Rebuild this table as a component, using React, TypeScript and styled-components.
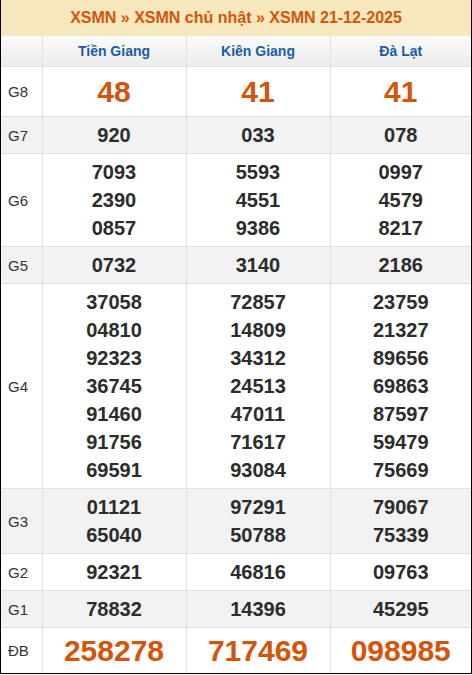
import React from 'react';
import styled, { createGlobalStyle } from 'styled-components';

const GlobalStyle = createGlobalStyle`
  body {
    margin: 0;
    font-family: "Liberation Sans", Arial, sans-serif;
    background: #fff;
  }
`;

type Prize = { label: string; big?: boolean; alt?: boolean; values: string[][] };

const provinces = ['Tiền Giang', 'Kiên Giang', 'Đà Lạt'];

const prizes: Prize[] = [
  { label: 'G8', big: true, values: [['48'], ['41'], ['41']] },
  { label: 'G7', alt: true, values: [['920'], ['033'], ['078']] },
  {
    label: 'G6',
    values: [
      ['7093', '2390', '0857'],
      ['5593', '4551', '9386'],
      ['0997', '4579', '8217'],
    ],
  },
  { label: 'G5', alt: true, values: [['0732'], ['3140'], ['2186']] },
  {
    label: 'G4',
    values: [
      ['37058', '04810', '92323', '36745', '91460', '91756', '69591'],
      ['72857', '14809', '34312', '24513', '47011', '71617', '93084'],
      ['23759', '21327', '89656', '69863', '87597', '59479', '75669'],
    ],
  },
  {
    label: 'G3',
    alt: true,
    values: [
      ['01121', '65040'],
      ['97291', '50788'],
      ['79067', '75339'],
    ],
  },
  { label: 'G2', values: [['92321'], ['46816'], ['09763']] },
  { label: 'G1', alt: true, values: [['78832'], ['14396'], ['45295']] },
  { label: 'ĐB', big: true, values: [['258278'], ['717469'], ['098985']] },
];

const App: React.FC = () => {
  return (
    <>
      <GlobalStyle />
      <Frame>
        <Title>XSMN » XSMN chủ nhật » XSMN 21-12-2025</Title>
        <Table>
          <colgroup>
            <col style={{ width: 41 }} />
            <col style={{ width: 144 }} />
            <col style={{ width: 144 }} />
            <col />
          </colgroup>
          <thead>
            <tr>
              <HeadCell />
              {provinces.map(p => (
                <HeadCell key={p}>{p}</HeadCell>
              ))}
            </tr>
          </thead>
          <tbody>
            {prizes.map(row => (
              <Row key={row.label} $alt={row.alt}>
                <LabelCell>{row.label}</LabelCell>
                {row.values.map((nums, i) => (
                  <NumberCell key={i} $big={row.big} $first={row.label === 'G8'}>
                    {nums.map(n => (
                      <div key={n}>{n}</div>
                    ))}
                  </NumberCell>
                ))}
              </Row>
            ))}
          </tbody>
        </Table>
      </Frame>
    </>
  );
};

const Frame = styled.div`
  width: 472px;
  box-sizing: border-box;
  border: 1px solid #000;
  border-top: none;
  overflow: hidden;
`;

const Title = styled.div`
  height: 36px;
  line-height: 36px;
  background: #f6e8bc;
  color: #d4550a;
  font-size: 16px;
  font-weight: bold;
  text-align: center;
`;

const Table = styled.table`
  width: 100%;
  table-layout: fixed;
  border-collapse: collapse;
  border-style: hidden;
`;

const HeadCell = styled.th`
  height: 30px;
  padding: 0;
  border: 1px solid #e2e2e2;
  background: linear-gradient(#fbfbfb, #ececec);
  color: #1b5ca5;
  font-size: 14px;
  font-weight: bold;
  text-align: center;
`;

const Row = styled.tr<{ $alt?: boolean }>`
  background: ${p => (p.$alt ? '#f2f2f2' : '#fff')};
`;

const LabelCell = styled.td`
  padding: 0 0 0 7px;
  border: 1px solid #e2e2e2;
  color: #333;
  font-size: 15px;
  text-align: left;
`;

const NumberCell = styled.td<{ $big?: boolean; $first?: boolean }>`
  padding: 4px 0;
  border: 1px solid #e2e2e2;
  text-align: center;
  font-weight: bold;
  font-size: ${p => (p.$big ? '30px' : '20px')};
  line-height: ${p => (p.$first ? '41px' : p.$big ? '37px' : '28px')};
  color: ${p => (p.$big ? '#d4550a' : '#2c2c2c')};
`;

export default App;
